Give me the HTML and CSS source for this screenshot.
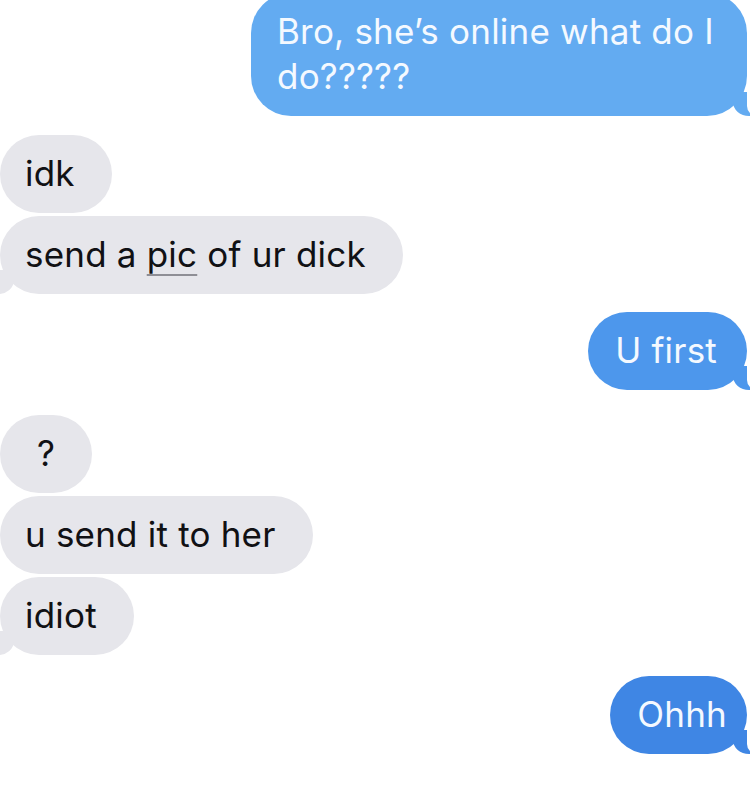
FILE: index.html
```html
<!DOCTYPE html>
<html lang="en">
<head>
<meta charset="utf-8">
<title>Messages</title>
<link rel="stylesheet" href="styles.css">
</head>
<body>
<div class="thread">
  <div class="group group-out first">
    <div class="bubble out out-1 tail">Bro, she’s online what do I do?????</div>
  </div>
  <div class="group group-in g2">
    <div class="bubble in">idk</div>
    <div class="bubble in tail">send a <span class="link">pic</span> of ur dick</div>
  </div>
  <div class="group group-out g3">
    <div class="bubble out out-2 tail">U first</div>
  </div>
  <div class="group group-in g4">
    <div class="bubble in short">?</div>
    <div class="bubble in">u send it to her</div>
    <div class="bubble in tail">idiot</div>
  </div>
  <div class="group group-out g5">
    <div class="bubble out out-3 tail">Ohhh</div>
  </div>
</div>
</body>
</html>
```
FILE: styles.css
```css
html, body {
  margin: 0;
  padding: 0;
  background: #ffffff;
}
body {
  width: 750px;
  height: 793px;
  overflow: hidden;
  font-family: Inter, "Liberation Sans", Arial, sans-serif;
}
.thread {
  display: flex;
  flex-direction: column;
}
.group {
  display: flex;
  flex-direction: column;
  gap: 3px;
}
.group-in {
  align-items: flex-start;
}
.group-out {
  align-items: flex-end;
  padding-right: 3px;
}
.first { margin-top: -7px; }
.g2 { margin-top: 19px; }
.g3 { margin-top: 18px; }
.g4 { margin-top: 25px; }
.g5 { margin-top: 21px; }

.bubble {
  position: relative;
  box-sizing: border-box;
  font-size: 35px;
  letter-spacing: 0.2px;
  line-height: 45px;
  padding: 16px 37px 17px 25px;
  border-radius: 39px;
  max-width: 520px;
}
.in {
  background: #e6e6eb;
  color: #111114;
}
.short {
  min-width: 90px;
  padding-left: 37px;
}
.out {
  color: #f4f9ff;
  padding: 16px 30px 17px 27px;
}
.out-1 {
  background: #63abf1;
  border-radius: 40px;
  padding-left: 26px;
  padding-right: 33px;
  max-width: 496px;
}
.out-2 { background: #4d97ec; }
.out-3 { background: #3f86e4; padding-right: 20px; }

.link {
  text-decoration: underline;
  text-decoration-color: #8e8e95;
  text-decoration-thickness: 2px;
  text-underline-offset: 7px;
}

/* tails */
.in.tail::before,
.in.tail::after,
.out.tail::before,
.out.tail::after {
  content: "";
  position: absolute;
  bottom: 0;
  height: 24px;
}
.in.tail::before {
  left: -8px;
  width: 22px;
  background: #e6e6eb;
  border-bottom-right-radius: 16px 14px;
}
.in.tail::after {
  left: -12px;
  width: 12px;
  background: #ffffff;
  border-bottom-right-radius: 10px;
}
.out.tail::before {
  right: -8px;
  width: 22px;
  background: inherit;
  border-bottom-left-radius: 16px 14px;
}
.out.tail::after {
  right: -12px;
  width: 12px;
  background: #ffffff;
  border-bottom-left-radius: 10px;
}
```
